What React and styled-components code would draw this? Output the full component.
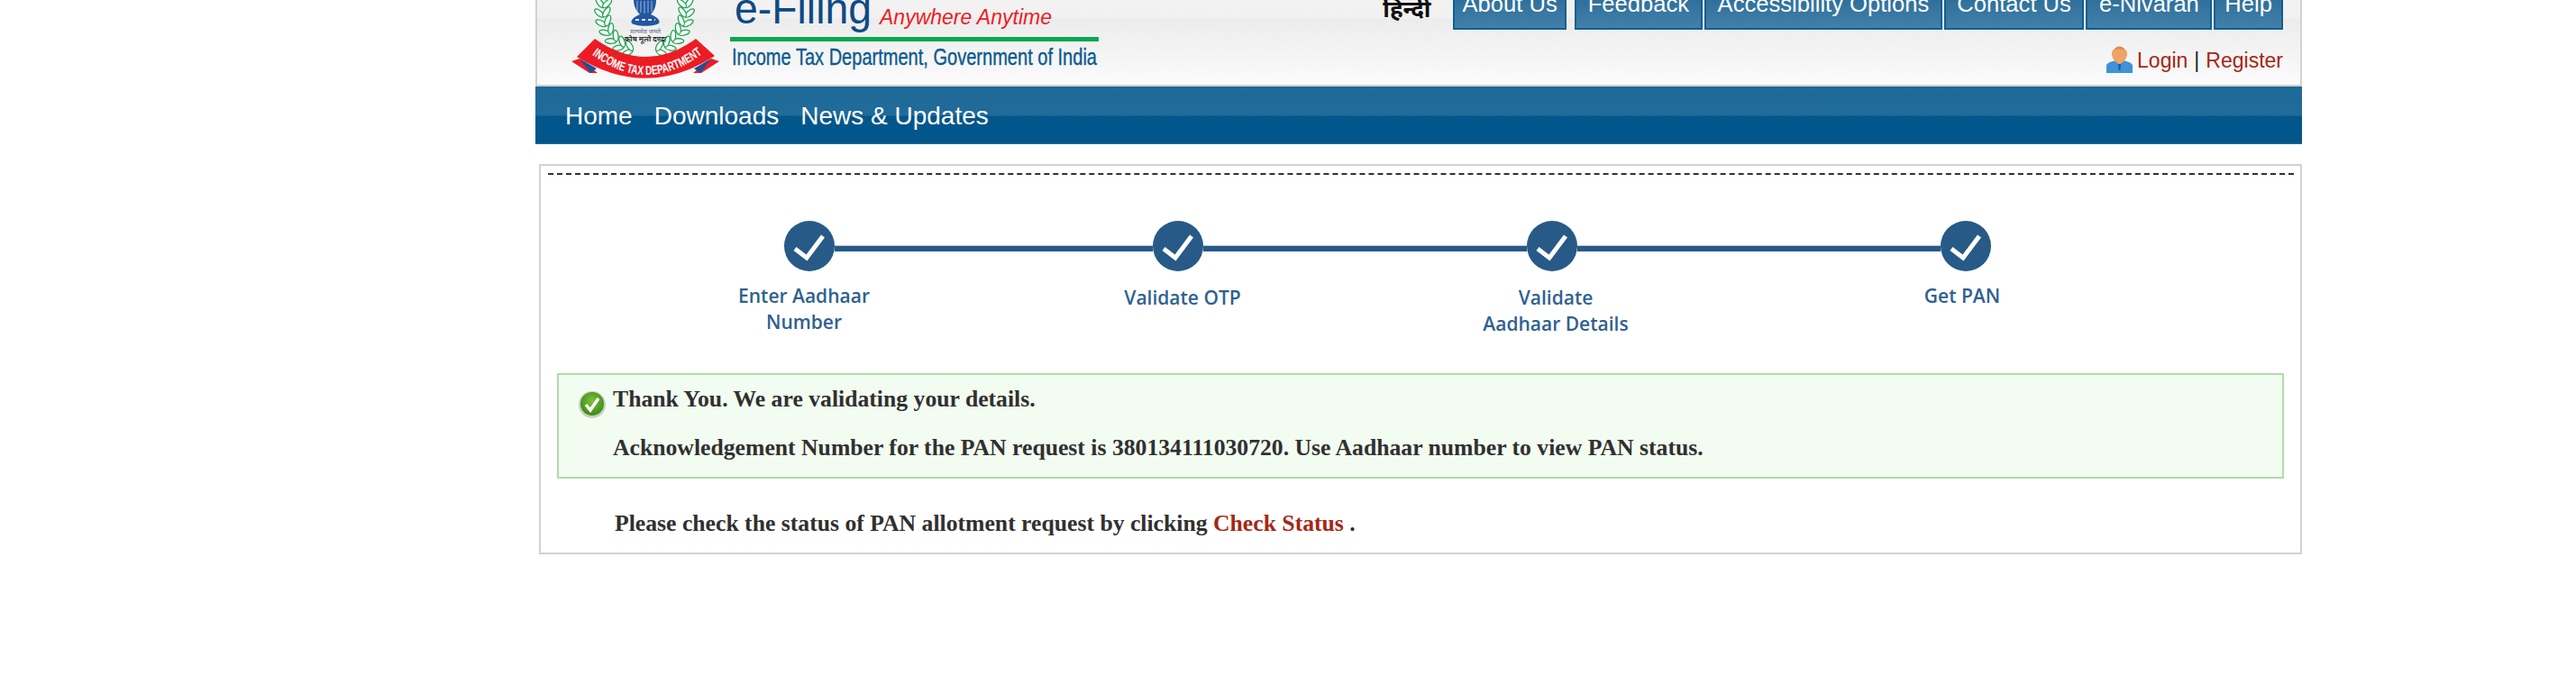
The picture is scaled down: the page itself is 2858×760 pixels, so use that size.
import React from "react";
import styled, { createGlobalStyle } from "styled-components";

const GlobalStyle = createGlobalStyle`
  html, body {
    margin: 0;
    padding: 0;
    background: #fff;
    font-family: "Liberation Sans", Arial, sans-serif;
  }
`;

const Page = styled.div`
  width: 1960px;
  margin-left: 594px;
  height: 760px;
  overflow: hidden;
`;

const Header = styled.header`
  box-sizing: border-box;
  height: 96px;
  padding-left: 40px;
  display: flex;
  justify-content: space-between;
  overflow: hidden;
  border-left: 2px solid #d2d2d2;
  border-right: 2px solid #d2d2d2;
  border-bottom: 2px solid #cfcfcf;
  background: linear-gradient(to bottom, #f2f2f2 0, #f1f1f1 20px, #ececec 21px, #fbfbfb 94px);
`;

const LogoSvg = styled.svg`
  display: block;
  flex: none;
  margin-left: -2px;
`;

const HeaderRight = styled.div`
  width: 1020px;
  padding-right: 19px;
  box-sizing: border-box;
`;

const TabRow = styled.div`
  height: 33px;
  display: flex;
  justify-content: flex-end;
  align-items: flex-end;
`;

const HindiLink = styled.a`
  font-family: "Noto Sans Devanagari", "Noto Sans", "Liberation Sans", sans-serif;
  font-size: 26px;
  font-weight: 700;
  line-height: 30px;
  color: #111;
  margin-right: 25px;
  margin-bottom: 5px;
`;

const Tab = styled.a`
  color: #fff;
  font-size: 25.6px;
  line-height: 27px;
  padding: 0 ${(props) => props.$pad}px 13px;
  margin-left: ${(props) => props.$gap}px;
  border: 2px solid #0f5f93;
  border-top: none;
  background: linear-gradient(to bottom, #2a6c97 0, #4280a9 100%);
`;

const LoginRow = styled.div`
  margin-top: 17px;
  display: flex;
  justify-content: flex-end;
  align-items: center;
  font-size: 23px;
  line-height: 30px;
  color: #222;
`;

const LoginLink = styled.a`
  color: #a52714;
  padding-top: 2px;
`;

const Pipe = styled.span`
  margin: 0 7px;
  padding-top: 2px;
`;

const UserIcon = styled.svg`
  display: block;
  margin-right: 5px;
`;

const NavBar = styled.nav`
  box-sizing: border-box;
  height: 64px;
  display: flex;
  align-items: center;
  gap: 24px;
  padding: 3px 0 0 33px;
  border-bottom: 1px solid #2a6f9b;
  background: linear-gradient(to bottom, #1e6a98 0, #206b9a 50%, #02568b 53%, #02568b 100%);
`;

const NavLink = styled.a`
  color: #fff;
  font-size: 28px;
  line-height: 34px;
`;

const Card = styled.section`
  box-sizing: border-box;
  width: 1956px;
  height: 433px;
  margin: 22px 0 0 4px;
  padding: 8px 7px 0 8px;
  border: 2px solid #d2d2d2;
`;

const DashedRule = styled.div`
  border-top: 2px dashed #333;
`;

const StepRow = styled.div`
  display: flex;
  align-items: center;
  margin: 51px 0 0 262px;
`;

const StepCircle = styled.div`
  flex: none;
  width: 56px;
  height: 56px;
  border-radius: 50%;
  background: #275a87;
  display: flex;
  align-items: center;
  justify-content: center;
`;

const StepLine = styled.div`
  flex: none;
  width: ${(props) => props.$width}px;
  height: 6px;
  margin-top: 6px;
  background: #275a87;
  box-shadow: 0 -1px 0 #b8c8d6;
`;

const LabelRow = styled.div`
  display: flex;
  align-items: flex-start;
  margin: 13px 0 0 164px;
  height: 80px;
`;

const StepLabel = styled.div`
  flex: none;
  width: 240px;
  margin-left: ${(props) => props.$gap || 0}px;
  padding-top: ${(props) => props.$top || 0}px;
  text-align: center;
  color: #2f6190;
  font-family: "Open Sans", "Noto Sans", sans-serif;
  font-weight: 600;
  font-size: 21px;
  line-height: 29px;
`;

const Notice = styled.div`
  box-sizing: border-box;
  display: flex;
  align-items: flex-start;
  width: 1916px;
  height: 117px;
  margin: 20px 0 0 10px;
  padding: 12px 0 0 22px;
  border: 2px solid #aedcaa;
  background: #f3fcf1;
`;

const NoticeIcon = styled.svg`
  display: block;
  flex: none;
  margin: 5px 8px 0 0;
`;

const MessageText = styled.p`
  margin: 0;
  font-family: "Liberation Serif", "Times New Roman", serif;
  font-weight: 700;
  font-size: 25.7px;
  line-height: 30px;
  color: #303030;
`;

const NoticeBody = styled.div`
  display: flex;
  flex-direction: column;
  gap: 24px;
`;

const StatusLine = styled(MessageText)`
  margin: 35px 0 0 74px;
`;

const StatusLink = styled.a`
  color: #a52714;
`;

const CheckMark = () => (
  <svg width="56" height="56" viewBox="0 0 56 56">
    <path d="M12 31 L25 41 L43 17" fill="none" stroke="#fff" strokeWidth="5" />
  </svg>
);

// wreath nodes, angle in degrees from straight up round the emblem centre
const leafAngles = [72, 85, 98, 111, 124, 137, 150, 163];

const LeafPair = ({ angle, side }) => {
  const rad = (angle * Math.PI) / 180;
  const x = 81 + side * 46 * Math.sin(rad);
  const y = 12 - 46 * Math.cos(rad);
  return (
    <g transform={`translate(${x} ${y}) rotate(${side * (angle - 90)})`}>
      <ellipse cx="0" cy="-6" rx="2.8" ry="6.3" fill="#fff" stroke="#1da550" strokeWidth="1.3" transform={`rotate(${side * 42})`} />
      <ellipse cx="0" cy="-6" rx="2.8" ry="6.3" fill="#fff" stroke="#1da550" strokeWidth="1.3" transform={`rotate(${side * -42})`} />
    </g>
  );
};

const Logo = () => (
  <LogoSvg width="590" height="94" viewBox="0 0 590 94">
    {leafAngles.map((a) => (
      <React.Fragment key={a}>
        <LeafPair angle={a} side={-1} />
        <LeafPair angle={a} side={1} />
      </React.Fragment>
    ))}
    <path d="M69 0 H94 C94 8 91 13 88 16 C93 18 98 21 97.5 25 C95 30 69 30 66.5 25 C66 21 71 18 76 16 C73 13 69 8 69 0 Z" fill="#23569f" />
    <path d="M73 1 V13 M77 1 V14 M81 1 V15 M85 1 V14 M89 1 V13" stroke="#9db9dc" strokeWidth="1" />
    <path d="M71 22 H93" stroke="#d5e3f3" strokeWidth="2" strokeDasharray="4 3" />
    <text x="82" y="37" textAnchor="middle" fontFamily="Noto Sans Devanagari, Noto Sans, sans-serif" fontSize="7" fill="#5b6f86">सत्यमेव जयते</text>
    <text x="82" y="46" textAnchor="middle" fontFamily="Noto Sans Devanagari, Noto Sans, sans-serif" fontWeight="700" fontSize="8" fill="#333">कोष मूलो दण्डः</text>

    <path d="M0 68 L9 65 L29 81 L20 81 Z" fill="#ed1c24" />
    <path d="M9 65 L28 76 L21 81 Z" fill="#1d4f9c" />
    <path d="M164 68 L155 65 L135 81 L144 81 Z" fill="#ed1c24" />
    <path d="M155 65 L136 76 L143 81 Z" fill="#1d4f9c" />
    <path d="M26 43 L6 63 Q83 111 159 62 L138 43 Q83 83 26 43 Z" fill="#ed1c24" />
    <path id="ribbonArc" d="M22 60 Q83 106 145 60" fill="none" />
    <text fontFamily="Liberation Sans, sans-serif" fontWeight="700" fontSize="14" fill="#fff">
      <textPath href="#ribbonArc" textLength="133" lengthAdjust="spacingAndGlyphs" startOffset="1">
        INCOME TAX DEPARTMENT
      </textPath>
    </text>

    <text x="181" y="26" fontFamily="Liberation Sans, sans-serif" fontSize="48" fill="#0e4a86" textLength="152" lengthAdjust="spacingAndGlyphs">
      e-Filing
    </text>
    <text x="342" y="27" fontFamily="Liberation Sans, sans-serif" fontStyle="italic" fontSize="24" fill="#ee1c25" textLength="191" lengthAdjust="spacingAndGlyphs">
      Anywhere Anytime
    </text>
    <rect x="176" y="41" width="409" height="5" fill="#0aa651" />
    <text x="178" y="72" fontFamily="Liberation Sans, sans-serif" fontSize="26" fill="#0d5b8e" stroke="#0d5b8e" strokeWidth="0.4" textLength="405" lengthAdjust="spacingAndGlyphs">
      Income Tax Department, Government of India
    </text>
  </LogoSvg>
);

const tabs = [
  { label: "About Us", pad: 8, gap: 0 },
  { label: "Feedback", pad: 13, gap: 9 },
  { label: "Accessibility Options", pad: 12.5, gap: 2 },
  { label: "Contact Us", pad: 12.5, gap: 2 },
  { label: "e-Nivaran", pad: 12.5, gap: 2 },
  { label: "Help", pad: 10, gap: 2 },
];
const navItems = ["Home", "Downloads", "News & Updates"];

const App = () => {
  return (
    <Page>
      <GlobalStyle />
      <Header>
        <Logo />
        <HeaderRight>
          <TabRow>
            <HindiLink>हिन्दी</HindiLink>
            {tabs.map((tab) => (
              <Tab key={tab.label} $pad={tab.pad} $gap={tab.gap}>
                {tab.label}
              </Tab>
            ))}
          </TabRow>
          <LoginRow>
            <UserIcon width="29" height="30" viewBox="0 0 29 30">
              <path d="M0 30 V21 C2 18 7 17 10 16 L14.5 20 L19 16 C22 17 27 18 29 21 V30 Z" fill="#3d93d6" />
              <path d="M6 7 C7 1 22 1 23 7 C24 11 20 19 14.5 20 C9 19 5 11 6 7 Z" fill="#efa465" />
              <path d="M8 5 C10 -1 19 -1 21 5 C17 3 12 3 8 5 Z" fill="#d98a4c" />
              <path d="M13 20 H16 L15.5 27 H13.5 Z" fill="#1f5f9c" />
            </UserIcon>
            <LoginLink>Login</LoginLink>
            <Pipe>|</Pipe>
            <LoginLink>Register</LoginLink>
          </LoginRow>
        </HeaderRight>
      </Header>
      <NavBar>
        {navItems.map((item) => (
          <NavLink key={item}>{item}</NavLink>
        ))}
      </NavBar>
      <Card>
        <DashedRule />
        <StepRow>
          <StepCircle><CheckMark /></StepCircle>
          <StepLine $width={353} />
          <StepCircle><CheckMark /></StepCircle>
          <StepLine $width={359} />
          <StepCircle><CheckMark /></StepCircle>
          <StepLine $width={403} />
          <StepCircle><CheckMark /></StepCircle>
        </StepRow>
        <LabelRow>
          <StepLabel>Enter Aadhaar<br />Number</StepLabel>
          <StepLabel $gap={180} $top={2}>Validate OTP</StepLabel>
          <StepLabel $gap={174} $top={2}>Validate<br />Aadhaar Details</StepLabel>
          <StepLabel $gap={211}>Get PAN</StepLabel>
        </LabelRow>
        <Notice>
          <NoticeIcon width="30" height="32" viewBox="0 0 30 32">
            <defs>
              <radialGradient id="ball" cx="50%" cy="40%" r="60%">
                <stop offset="0" stopColor="#7ec23c" />
                <stop offset="1" stopColor="#3c8a14" />
              </radialGradient>
            </defs>
            <circle cx="15" cy="16" r="15" fill="#c9cfc4" />
            <circle cx="15" cy="15" r="13" fill="url(#ball)" />
            <path d="M8 16 L13 22 L22 9" fill="none" stroke="#fff" strokeWidth="3.5" />
          </NoticeIcon>
          <NoticeBody>
            <MessageText>Thank You. We are validating your details.</MessageText>
            <MessageText>Acknowledgement Number for the PAN request is 380134111030720. Use Aadhaar number to view PAN status.</MessageText>
          </NoticeBody>
        </Notice>
        <StatusLine>
          Please check the status of PAN allotment request by clicking <StatusLink>Check Status</StatusLink> .
        </StatusLine>
      </Card>
    </Page>
  );
};

export default App;
